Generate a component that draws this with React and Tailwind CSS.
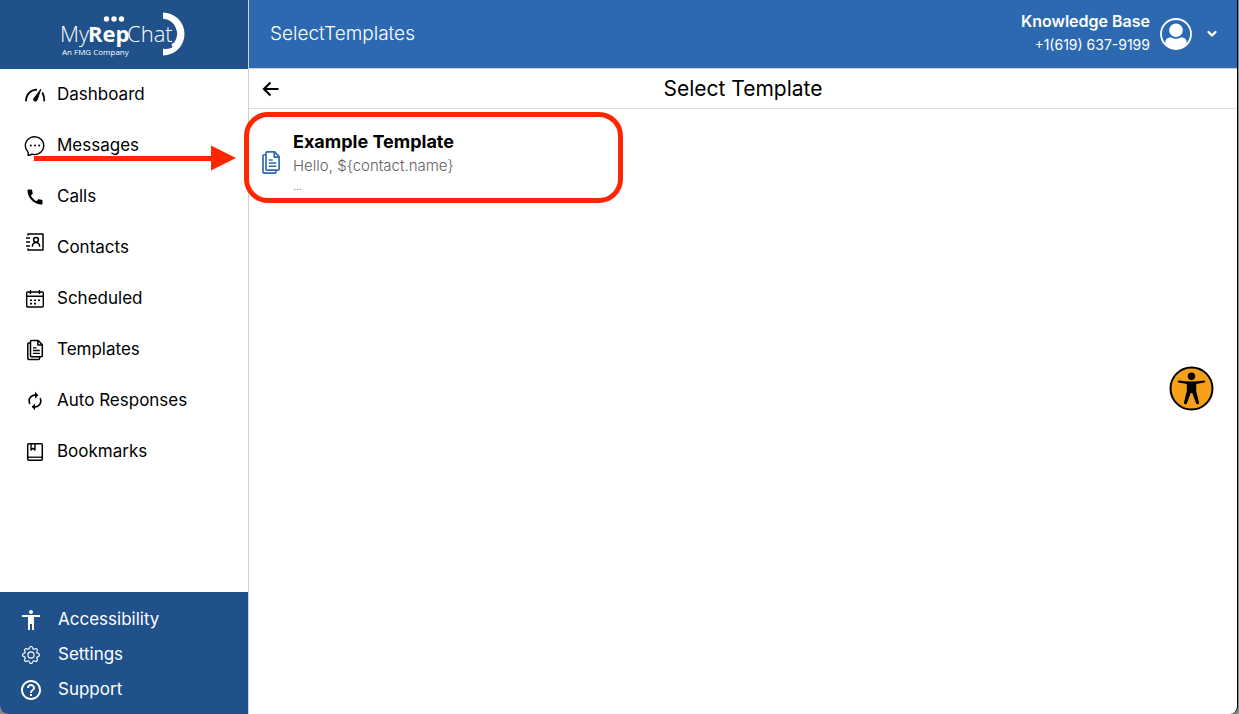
import React from "react";
import { MdAccessibility, MdAutorenew, MdCall, MdHelpOutline } from "react-icons/md";
import { BsGear } from "react-icons/bs";

function Logo() {
  return (
    <svg width="126" height="48" viewBox="0 0 126 48" role="img" aria-label="MyRepChat, An FMG Company">
      <g fill="#fff">
        <text x="-1" y="31" fontFamily="'Open Sans', sans-serif" fontSize="22" fontWeight="300">
          My
        </text>
        <text x="27" y="31" fontFamily="'Open Sans', sans-serif" fontSize="22" fontWeight="700">
          Rep
        </text>
        <text x="66" y="31" fontFamily="'Open Sans', sans-serif" fontSize="22" fontWeight="300">
          Chat
        </text>
        <text x="1" y="44" fontFamily="'Open Sans', sans-serif" fontSize="8" fontWeight="500">
          An FMG Company
        </text>
        <circle cx="45.500" cy="8" r="2.700" />
        <circle cx="53" cy="8" r="2.700" />
        <circle cx="60.500" cy="8" r="2.700" />
        <path d="M102 1.500a21.500 21.500 0 0 1 0 43v-7c3 1 6.500.5 9.500-1.200l-1-3.300 2.500-1.200A15 15 0 0 0 102 7.800z" />
      </g>
    </svg>
  );
}

function GaugeIcon() {
  return (
    <svg width="22" height="22" viewBox="0 0 22 22" fill="none" stroke="currentColor" aria-hidden="true">
      <path d="M2 17.300C2 10.500 6.500 5.800 13 5.700" strokeWidth="1.800" />
      <path d="M18.300 8.500c1.400 2.400 2.100 5.400 2 8.800" strokeWidth="1.800" />
      <path d="M16.800 5.200l-3.600 10.600c-.8 2.300-4.300 1.500-3.500-1z" fill="currentColor" strokeWidth=".9" />
    </svg>
  );
}

function ChatIcon() {
  return (
    <svg width="22" height="22" viewBox="0 0 22 22" fill="none" stroke="currentColor" strokeWidth="1.400" strokeLinejoin="round" aria-hidden="true">
      <path d="M4 20.300c.5-1.700.3-2.700-.3-3.700A9.200 8.900 0 1 1 8 19.200c-1.300.8-2.700 1.100-4 1.100z" />
      <g fill="currentColor" stroke="none">
        <circle cx="6.800" cy="10.500" r="1" />
        <circle cx="11" cy="10.500" r="1" />
        <circle cx="15.200" cy="10.500" r="1" />
      </g>
    </svg>
  );
}

function ContactsIcon() {
  return (
    <svg width="22" height="32" viewBox="0 0 22 32" fill="none" stroke="currentColor" strokeWidth="1.500" aria-hidden="true">
      <path d="M4 3.500V2h15v16H4v-1.500" strokeLinejoin="round" />
      <path d="M2 6h4M2 10h4M2 14h4" />
      <circle cx="12" cy="7.800" r="2.400" />
      <path d="M8.300 14.600c.2-2.500 1.700-4 3.700-4s3.500 1.500 3.700 4" />
    </svg>
  );
}

function CalendarIcon() {
  return (
    <svg width="22" height="22" viewBox="0 0 22 22" fill="none" stroke="currentColor" strokeWidth="1.400" aria-hidden="true">
      <rect x="2.700" y="4" width="16.600" height="15" rx="1" />
      <path d="M3 8.300h16M6.500 2v4M15.500 2v4" />
      <path d="M6 12.200h2M10 12.200h2M14 12.200h2M6 15.600h2M10 15.600h2" strokeWidth="1.600" />
    </svg>
  );
}

function DocumentsIcon({ className }) {
  return (
    <svg viewBox="0 0 18 22" fill="none" stroke="currentColor" strokeWidth="1.500" strokeLinejoin="round" className={className} aria-hidden="true">
      <path d="M5.500 1.500h6.800l4 4.200v11.100a1 1 0 0 1-1 1H5.500a1 1 0 0 1-1-1V2.500a1 1 0 0 1 1-1z" />
      <path d="M11.900 1.800v4.300h4.200" />
      <path d="M4.300 4h-1.500a1 1 0 0 0-1 1v14.500a1 1 0 0 0 1 1h9.700a1 1 0 0 0 1-1v-1.500" />
      <path d="M7 8.800h3.500M7 11.500h6.800M7 14.300h6.800" strokeWidth="1.300" />
    </svg>
  );
}

function BookmarkIcon() {
  return (
    <svg width="22" height="22" viewBox="0 0 22 22" fill="none" stroke="currentColor" strokeWidth="1.500" strokeLinejoin="round" aria-hidden="true">
      <rect x="3.700" y="2.700" width="14.600" height="16.600" rx="1" />
      <path d="M4 16.200h14" strokeWidth="1.300" />
      <path d="M7 3v6l2-1.700L11 9V3" strokeWidth="1.400" />
    </svg>
  );
}

const mainLinks = [
  { label: "Dashboard", icon: <GaugeIcon /> },
  { label: "Messages", icon: <ChatIcon /> },
  { label: "Calls", icon: <MdCall size={20} /> },
  { label: "Contacts", icon: <ContactsIcon /> },
  { label: "Scheduled", icon: <CalendarIcon /> },
  { label: "Templates", icon: <DocumentsIcon className="h-[22px] w-[18px]" /> },
  { label: "Auto Responses", icon: <MdAutorenew size={20} /> },
  { label: "Bookmarks", icon: <BookmarkIcon /> },
];

const footerLinks = [
  { label: "Accessibility", icon: <MdAccessibility size={24} /> },
  { label: "Settings", icon: <BsGear size={18} /> },
  { label: "Support", icon: <MdHelpOutline size={24} /> },
];

function Sidebar() {
  return (
    <aside className="flex w-[249px] shrink-0 flex-col border-r border-[#d0d0d0] text-[17px]">
      <div className="flex h-[69px] items-center justify-center bg-[#20518a]">
        <Logo />
      </div>
      <nav aria-label="Main" className="flex-1">
        {mainLinks.map((l) => (
          <a key={l.label} href="#" className="flex h-[51px] items-center gap-[11px] pl-6">
            <span className="flex w-[22px] justify-center">{l.icon}</span>
            {l.label}
          </a>
        ))}
      </nav>
      <nav aria-label="Help" className="bg-[#20518a] pt-2.5 pb-[7px] text-white">
        {footerLinks.map((l) => (
          <a key={l.label} href="#" className="flex h-[35px] items-center gap-[15px] pl-[19px]">
            <span className="flex w-6 justify-center">{l.icon}</span>
            {l.label}
          </a>
        ))}
      </nav>
    </aside>
  );
}

function TopBar() {
  return (
    <header className="flex h-[69px] items-center justify-between border-b border-[#d0d0d0] bg-[#2d69b1] pr-[15px] pl-[21px] text-white">
      <h1 className="text-[19px] font-light">SelectTemplates</h1>
      <button type="button" className="flex items-center gap-2.5 text-right">
        <span className="pb-0.5">
          <span className="block text-base leading-6 font-semibold">Knowledge Base</span>
          <span className="block text-sm leading-6">+1(619) 637-9199</span>
        </span>
        <svg width="32" height="32" viewBox="0 0 32 32" aria-hidden="true">
          <circle cx="16" cy="16" r="15" fill="none" stroke="#fff" strokeWidth="1.800" />
          <circle cx="16" cy="12.300" r="6.800" fill="#fff" />
          <path d="M5 25c.3-3.800 2.500-5.700 6-5.800 3 2.200 7 2.200 10 0 3.500.1 5.700 2 6 5.800-5.500 7.500-16.500 7.500-22 0z" fill="#fff" />
        </svg>
        <svg width="20" height="20" viewBox="0 0 20 20" fill="none" stroke="#fff" strokeWidth="2.400" strokeLinecap="round" strokeLinejoin="round" aria-hidden="true">
          <path d="M6.500 8l3.500 3.500L13.500 8" />
        </svg>
      </button>
    </header>
  );
}

export default function App() {
  return (
    <div className="flex min-h-screen bg-[#85858b] pr-px font-['Inter',sans-serif] text-base text-black">
      <div className="relative flex flex-1 overflow-hidden rounded-b-lg border-r border-black bg-white">
        <Sidebar />
        <div className="flex min-w-0 flex-1 flex-col">
          <TopBar />
          <div className="grid h-10 grid-cols-[1fr_auto_1fr] items-center border-b border-[#e0e0e0] px-[13px]">
            <button type="button" aria-label="Back" className="justify-self-start">
              <svg width="18" height="18" viewBox="0 0 18 18" fill="none" stroke="currentColor" strokeWidth="2.200" aria-hidden="true">
                <path d="M8.500 2.500L2 9l6.500 6.500M2 9h14.500" />
              </svg>
            </button>
            <h2 className="text-[21px]">Select Template</h2>
          </div>
          <main className="flex-1">
            <a href="#" className="flex items-center gap-3 px-3 pt-5">
              <DocumentsIcon className="h-[25px] w-5 text-[#2d69b1]" />
              <span>
                <span className="block text-lg leading-[26px] font-bold">Example Template</span>
                <span className="block text-[15px] leading-[22px] font-light text-[#616161]">Hello, ${"{contact.name}"}</span>
                <span className="block text-[10px] leading-[18px] text-[#616161]">...</span>
              </span>
            </a>
          </main>
        </div>

        <div className="pointer-events-none absolute top-[112px] left-[244px] h-[91px] w-[379px] rounded-[24px] border-[5px] border-[#ff2600]" />
        <svg width="204" height="26" viewBox="0 0 204 26" fill="#ff2600" className="pointer-events-none absolute top-[145px] left-[33px]" aria-hidden="true">
          <path d="M1 11h177V.5L203 13l-25 12.500V16H1z" />
        </svg>
        <button type="button" aria-label="Accessibility options" className="absolute top-[366px] right-[23px]">
          <svg width="45" height="45" viewBox="0 0 45 45" aria-hidden="true">
            <circle cx="22.500" cy="22.500" r="21" fill="#f6a01a" stroke="#000" strokeWidth="2" />
            <circle cx="22.500" cy="10.300" r="3.700" />
            <path d="M10 14.400c8 1.500 17 1.500 25 0 1.400-.2 1.700 1.700.4 2l-8.200 1.500v7l2.800 11.500c.4 1.900-2.300 2.500-2.900.8L23.300 27h-1.600l-3.800 10.200c-.6 1.700-3.300 1.100-2.900-.8l2.800-11.500v-7l-8.200-1.500c-1.300-.3-1-2.200.4-2z" />
          </svg>
        </button>
      </div>
    </div>
  );
}
